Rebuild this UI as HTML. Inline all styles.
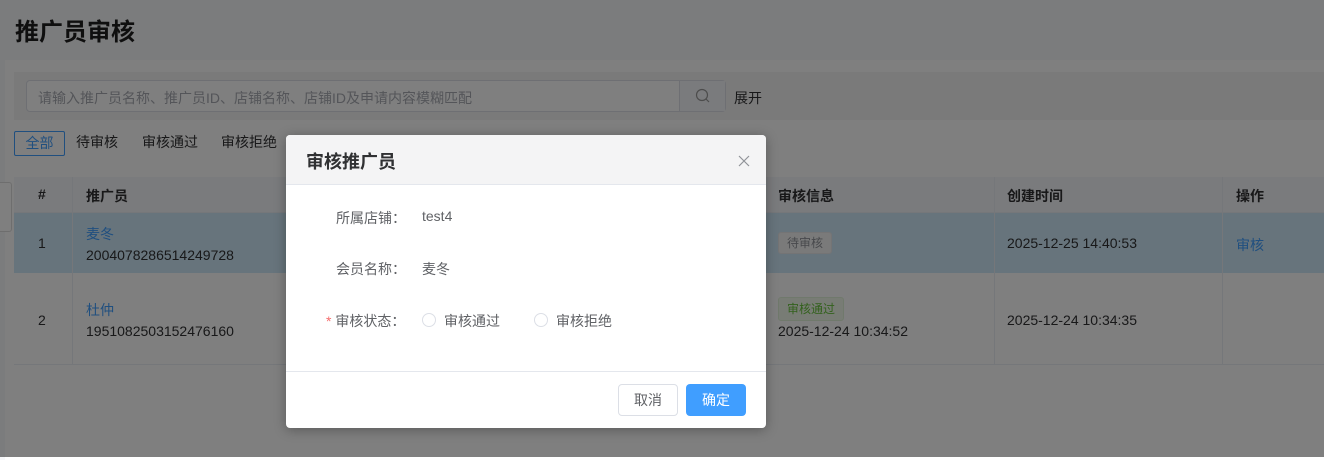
<!DOCTYPE html>
<html><head><meta charset="utf-8"><style>
*{box-sizing:border-box;margin:0;padding:0}
body{width:1324px;height:457px;overflow:hidden;position:relative;background:#f7f8fa;font-family:"Liberation Sans","Noto Sans CJK SC",sans-serif;font-size:14px;color:#303133}
.abs{position:absolute}
.title{left:15px;top:12px;font-size:24px;font-weight:bold;color:#1f1f1f}
.card{left:5px;top:60px;width:1330px;height:400px;background:#fff}
.sbox{left:14px;top:72px;width:1320px;height:48px;background:#f4f4f5}
.inp{left:26px;top:80px;width:700px;height:32px;border:1px solid #dcdfe6;border-radius:4px;background:#fff}
.inp span{position:absolute;left:11px;top:7px;color:#a8abb2;font-size:14px}
.inp .btn{position:absolute;right:0;top:0;width:46px;height:30px;border-left:1px solid #dcdfe6;background:#f5f7fa}
.tab{top:131px;height:25px;line-height:23px;font-size:14px;padding:0 10px}
.th{top:177px;height:36px;background:#f5f7fa;left:14px;width:1320px;border-bottom:1px solid #ebeef5}
.r1{top:213px;height:60px;left:14px;width:1320px;background:#cfe9f8}
.r2{top:273px;height:92px;left:14px;width:1320px;border-bottom:1px solid #ebeef5}
.vl{width:1px;background:#ebeef5;top:177px;height:188px}
.txt{white-space:nowrap}
.ov{left:0;top:0;width:1324px;height:457px;background:rgba(0,0,0,0.5)}
.modal{left:286px;top:135px;width:480px;height:293px;background:#fff;border-radius:4px;overflow:hidden;box-shadow:0 2px 12px rgba(0,0,0,.3)}
.mh{height:50px;background:#f4f4f5;border-bottom:1px solid #e4e7ed;padding:13px 20px;font-size:18px;font-weight:bold;color:#303133}
.lab{color:#606266;font-size:14px}
.radio{width:14px;height:14px;border:1px solid #dcdfe6;border-radius:50%}
</style></head><body>
<div class="abs title">推广员审核</div>
<div class="abs card"></div>
<div class="abs sbox"></div>
<div class="abs inp"><span>请输入推广员名称、推广员ID、店铺名称、店铺ID及申请内容模糊匹配</span><div class="btn"><svg width="46" height="30"><circle cx="22" cy="14" r="5.5" fill="none" stroke="#999" stroke-width="1.2"/><path d="M26 18l3 3" stroke="#999" stroke-width="1.2"/></svg></div></div>
<div class="abs txt" style="left:734px;top:88px">展开</div>
<div class="abs tab" style="left:14px;border:1px solid #409eff;color:#409eff;border-radius:2px;width:51px;padding:0;text-align:center">全部</div>
<div class="abs tab txt" style="left:66px">待审核</div>
<div class="abs tab txt" style="left:132px">审核通过</div>
<div class="abs tab txt" style="left:211px">审核拒绝</div>
<div class="abs th"></div>
<div class="abs r1"></div>
<div class="abs r2"></div>
<div class="abs vl" style="left:72px"></div>
<div class="abs vl" style="left:765px"></div>
<div class="abs vl" style="left:994px"></div>
<div class="abs vl" style="left:1222px"></div>
<div class="abs" style="left:0;top:182px;width:12px;height:50px;background:#fff;border:1px solid #ddd;border-left:none;border-radius:0 3px 3px 0"></div>
<div class="abs txt" style="left:38px;top:186px;font-weight:bold">#</div>
<div class="abs txt" style="left:86px;top:186px;font-weight:bold">推广员</div>
<div class="abs txt" style="left:778px;top:186px;font-weight:bold">审核信息</div>
<div class="abs txt" style="left:1007px;top:186px;font-weight:bold">创建时间</div>
<div class="abs txt" style="left:1236px;top:186px;font-weight:bold">操作</div>
<div class="abs txt" style="left:38px;top:235px">1</div>
<div class="abs txt" style="left:86px;top:224px;color:#409eff">麦冬</div>
<div class="abs txt" style="left:86px;top:247px">2004078286514249728</div>
<div class="abs txt" style="left:778px;top:232px;height:22px;padding:0 8px;line-height:20px;font-size:12px;background:#f4f4f5;border:1px solid #e9e9eb;color:#909399;border-radius:3px">待审核</div>
<div class="abs txt" style="left:1007px;top:235px">2025-12-25 14:40:53</div>
<div class="abs txt" style="left:1236px;top:235px;color:#409eff">审核</div>
<div class="abs txt" style="left:38px;top:312px">2</div>
<div class="abs txt" style="left:86px;top:300px;color:#409eff">杜仲</div>
<div class="abs txt" style="left:86px;top:323px">1951082503152476160</div>
<div class="abs txt" style="left:778px;top:297px;height:24px;padding:0 8px;line-height:22px;font-size:12px;background:#f0f9eb;border:1px solid #e1f3d8;color:#67c23a;border-radius:3px">审核通过</div>
<div class="abs txt" style="left:778px;top:323px">2025-12-24 10:34:52</div>
<div class="abs txt" style="left:1007px;top:312px">2025-12-24 10:34:35</div>
<div class="abs ov"></div>
<div class="abs modal">
<div class="mh">审核推广员</div>
<svg class="abs" style="left:452px;top:20px" width="12" height="12"><path d="M1 1l10 10M11 1L1 11" stroke="#909399" stroke-width="1.2"/></svg>
<div class="abs lab" style="left:50px;top:73px">所属店铺：</div>
<div class="abs lab" style="left:136px;top:73px">test4</div>
<div class="abs lab" style="left:50px;top:124px">会员名称：</div>
<div class="abs lab" style="left:136px;top:124px">麦冬</div>
<div class="abs lab" style="left:40px;top:176px"><span style="color:#f56c6c">*</span> 审核状态：</div>
<div class="abs radio" style="left:136px;top:178px"></div>
<div class="abs lab" style="left:158px;top:176px">审核通过</div>
<div class="abs radio" style="left:248px;top:178px"></div>
<div class="abs lab" style="left:270px;top:176px">审核拒绝</div>
<div class="abs" style="left:0;top:236px;width:480px;height:1px;background:#e4e7ed"></div>
<div class="abs" style="left:332px;top:249px;width:60px;height:32px;border:1px solid #dcdfe6;border-radius:4px;text-align:center;line-height:30px;color:#606266">取消</div>
<div class="abs" style="left:400px;top:249px;width:60px;height:32px;background:#409eff;border-radius:4px;text-align:center;line-height:32px;color:#fff">确定</div>
</div>
</body></html>
